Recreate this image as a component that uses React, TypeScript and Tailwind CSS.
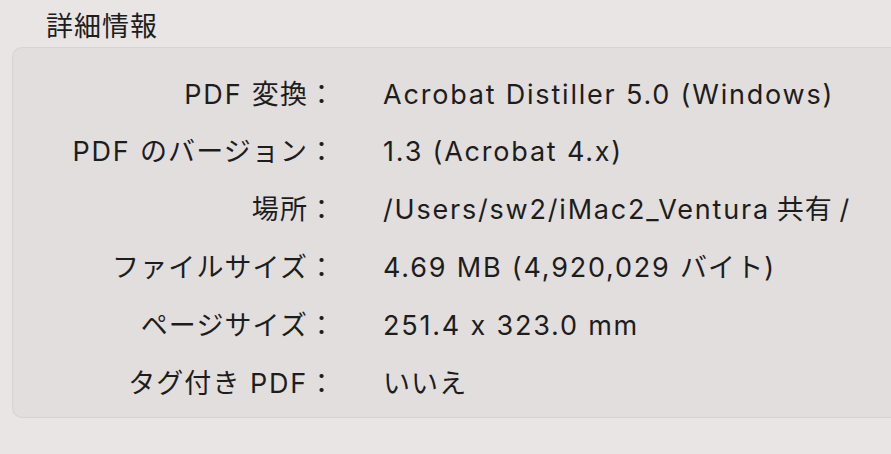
const rows: [string, string][] = [
  ['PDF 変換', 'Acrobat Distiller 5.0 (Windows)'],
  ['PDF のバージョン', '1.3 (Acrobat 4.x)'],
  ['場所', '/Users/sw2/iMac2_Ventura\u2009共有\u2009/'],
  ['ファイルサイズ', '4.69 MB (4,920,029 バイト)'],
  ['ページサイズ', '251.4 x 323.0 mm'],
  ['タグ付き PDF', 'いいえ'],
];

// split into latin / japanese runs so the latin text can get a bit more tracking
const Runs = ({ text }: { text: string }) => {
  const parts = text.split(/([\u3000-\u30ff\u4e00-\u9fff\uff00-\uffef]+)/).filter(Boolean);
  return (
    <>
      {parts.map((p, i) =>
        /[\u3000-\u30ff\u4e00-\u9fff\uff00-\uffef]/.test(p) ? (
          <span key={i} className="tracking-[1.1px]">{p}</span>
        ) : (
          <span key={i} className="tracking-[1.8px]">{p}</span>
        )
      )}
    </>
  );
};

const App = () => {
  return (
    <div className="w-[891px] h-[454px] overflow-hidden bg-[#e9e5e4] text-[#1d1d1d] pt-[10px] font-['Inter','Noto_Sans_CJK_JP',sans-serif] [font-feature-settings:'calt'_0]">
      <h2 className="ml-[46px] text-[27px] leading-[34px] font-normal tracking-[1px]">詳細情報</h2>
      <div className="ml-[12px] mt-[3px] w-[900px] h-[371px] rounded-l-[10px] border border-r-0 border-[#d7d3d2] bg-[#e2dedd] pt-[18px]">
        {rows.map(([label, value]) => (
          <div key={label} className="flex h-[57.8px] items-center text-[27px]">
            <div className="w-[322px] text-right whitespace-nowrap">
              <Runs text={label} />
              <span>：</span>
            </div>
            <div className="ml-[48px] whitespace-nowrap">
              <Runs text={value} />
            </div>
          </div>
        ))}
      </div>
    </div>
  );
};

export default App;
